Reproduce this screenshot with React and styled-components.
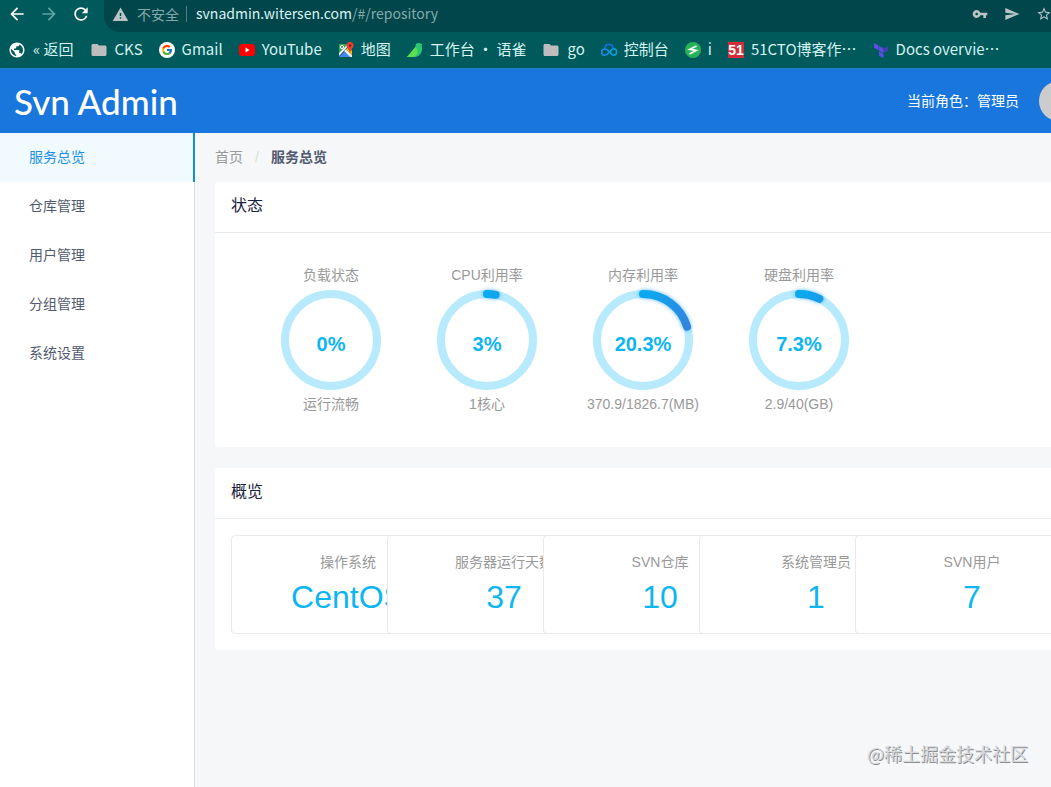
import React from 'react';
import styled, { createGlobalStyle } from 'styled-components';
import {
    MdArrowBack,
    MdArrowForward,
    MdRefresh,
    MdWarning,
    MdVpnKey,
    MdSend,
    MdStarBorder,
    MdFolder,
    MdPublic,
} from 'react-icons/md';
import { FcGoogle } from 'react-icons/fc';

const cjk = '"Noto Sans CJK SC", sans-serif';
const Cian = '#0db6f1';
const Gris = '#999';

const GlobalStyle = createGlobalStyle`
    * {
        box-sizing: border-box;
    }
    body {
        margin: 0;
        font-family: "Liberation Sans", ${cjk};
        font-size: 14px;
        color: #515a6e;
        background-color: #f5f7f9;
    }
    a {
        color: inherit;
        text-decoration: none;
    }
    h1, h2, p, ul, ol {
        margin: 0;
        padding: 0;
        font-weight: 400;
        list-style: none;
    }
`;

const Page = styled.div`
    position: relative;
    min-height: 100vh;
    display: flex;
    flex-direction: column;
    overflow: hidden;
`;

/* browser */
const Browser = styled.div`
    font-family: ${cjk};
    background-color: #005a5c;
    color: #d5f3f1;
    font-size: 15px;
`;
const Toolbar = styled.div`
    height: 32px;
    display: flex;
    align-items: flex-start;
`;
const NavButtons = styled.div`
    display: flex;
    gap: 12px;
    padding: 4px 13px 0 7px;
`;
const IconButton = styled.button`
    display: flex;
    flex-shrink: 0;
    padding: 0;
    border: 0;
    background: none;
    font-size: ${props => props.$size || 20}px;
    color: ${props => props.$color || '#fff'};
`;
const AddressBar = styled.div`
    flex: 1;
    height: 32px;
    display: flex;
    align-items: center;
    padding: 0 0 4px 8px;
    border-radius: 0 0 0 16px;
    background-color: #00464b;
    color: #86aaac;
    font-size: 14px;
    white-space: nowrap;
    svg {
        flex-shrink: 0;
    }
`;
const NotSecure = styled.span`
    margin-left: 8px;
    padding-right: 7px;
    border-right: 1px solid #4f8285;
    line-height: 16px;
`;
const Url = styled.span`
    flex: 1;
    margin-left: 9px;
    line-height: 20px;
    padding-bottom: 2px;
    b {
        font-weight: 400;
        color: #dcf3f3;
    }
`;
const Actions = styled.div`
    display: flex;
    gap: 16px;
    margin-right: -1px;
`;
const Bookmarks = styled.nav`
    height: 36px;
    display: flex;
    align-items: center;
    gap: 16px;
    padding: 0 8px;
    white-space: nowrap;
`;
const Bookmark = styled.a`
    display: flex;
    align-items: center;
    gap: 7px;
    line-height: 20px;
    svg {
        flex-shrink: 0;
    }
`;
const BookmarkText = styled.span`
    padding-bottom: 3px;
`;

/* app */
const Header = styled.header`
    height: 65px;
    display: flex;
    align-items: center;
    justify-content: space-between;
    padding-left: 14px;
    background-color: #1876dc;
    border-top: 1px solid #1d7fc0;
    color: #fff;
    font-family: ${cjk};
`;
const Logo = styled.h1`
    font-family: Lato, sans-serif;
    font-size: 35px;
    font-weight: 500;
    line-height: 64px;
`;
const User = styled.div`
    display: flex;
    align-items: center;
    gap: 20px;
    margin-right: -28px;
    line-height: 20px;
`;
const Role = styled.span`
    padding-bottom: 2px;
`;
const Avatar = styled.span`
    width: 40px;
    height: 40px;
    border-radius: 50%;
    background-color: #ccc;
`;
const Body = styled.div`
    flex: 1;
    display: flex;
`;
const Sidebar = styled.nav`
    width: 195px;
    flex-shrink: 0;
    background-color: #fff;
    border-right: 1px solid #dcdee2;
`;
const MenuItem = styled.a`
    display: block;
    height: 49px;
    padding-left: 29px;
    line-height: 49px;
    margin-right: -1px;
    color: ${props => (props.$active ? '#1c90e8' : '#515a6e')};
    background-color: ${props => (props.$active ? '#f0faff' : 'transparent')};
    border-right: ${props => (props.$active ? '2px solid #0f93c9' : '0')};
`;
const Main = styled.main`
    flex: 1;
    min-width: 0;
    display: flex;
    flex-direction: column;
    gap: 21px;
    padding-left: 20px;
`;
const Breadcrumb = styled.ol`
    display: flex;
    height: 49px;
    margin-bottom: -21px;
    line-height: 49px;
    color: ${Gris};
    li + li {
        color: #515a6e;
        font-weight: 700;
    }
    li + li::before {
        content: '/';
        margin: 0 12px;
        font-weight: 400;
        color: #dcdee2;
    }
`;
const Panel = styled.section`
    background-color: #fff;
    border-radius: 4px 0 0 4px;
`;
const PanelTitle = styled.h2`
    height: 51px;
    padding-left: 16px;
    line-height: 48px;
    font-size: 16px;
    color: #17233d;
    border-bottom: 1px solid #e8eaec;
`;
const Gauges = styled.ul`
    display: grid;
    grid-template-columns: repeat(4, 156px);
    padding: 32px 16px 32px 38px;
`;
const GaugeItem = styled.li`
    display: flex;
    flex-direction: column;
    align-items: center;
    color: ${Gris};
    line-height: 21px;
`;
const Ring = styled.div`
    display: grid;
    place-items: center;
    margin: 4px 0;
    > * {
        grid-area: 1 / 1;
    }
    svg {
        display: block;
        overflow: visible;
    }
`;
const Percent = styled.strong`
    padding-top: 8px;
    font-size: 20px;
    color: ${Cian};
`;
const Stats = styled.ul`
    display: grid;
    grid-template-columns: repeat(5, 156px);
    padding: 16px;
`;
/* each box is wider than its column, the next one covers the rest */
const StatBox = styled.li`
    width: 234px;
    height: 99px;
    padding-top: 16px;
    text-align: center;
    background-color: #fff;
    border: 1px solid #e8eaec;
    border-radius: 4px;
`;
const StatLabel = styled.p`
    line-height: 21px;
    color: ${Gris};
`;
const StatValue = styled.p`
    margin-top: 6px;
    font-size: 32px;
    line-height: 36px;
    color: ${Cian};
`;
const Watermark = styled.p`
    position: absolute;
    right: 23px;
    bottom: 20px;
    font-size: 18px;
    line-height: 27px;
    font-family: ${cjk};
    color: #d8d9db;
    text-shadow: 1px 1px 0 #8c8d90;
`;

const GoogleDisc = styled.span`
    display: flex;
    padding: 2px;
    border-radius: 50%;
    background-color: #fff;
`;
const MapsIcon = () => (
    <svg width="16" height="16" viewBox="0 0 16 16">
        <path d="M1 2h9L1 11z" fill="#34a853" />
        <path d="M1 11l9-9 1 1-10 11z" fill="#fff" />
        <path d="M1 15l5.500-5.500L12 15z" fill="#4285f4" />
        <path d="M6 9l2-2 6 6v2h-2z" fill="#e8eaed" />
        <path d="M8 7l3-2 3 4v4z" fill="#fbbc04" />
        <circle cx="4" cy="5" r="1.6" fill="none" stroke="#fff" />
        <path d="M12 0a3.600 3.600 0 0 0-3.600 3.600C8.400 6 11 7 12 11c1-4 3.600-5 3.600-7.400A3.600 3.600 0 0 0 12 0z" fill="#ea4335" />
        <circle cx="12" cy="3.600" r="1.300" fill="#8c1b12" />
    </svg>
);
const YoutubeIcon = () => (
    <svg width="16" height="16" viewBox="0 0 16 16">
        <rect y="2" width="16" height="12" rx="3" fill="#f00" />
        <path d="M6.500 5.500v5L10.500 8z" fill="#fff" />
    </svg>
);
const YuqueIcon = () => (
    <svg width="16" height="16" viewBox="0 0 16 16">
        <path d="M0 15L8.500 5C8 2 10 .5 12 1c1.200.2 1.500 1 3.500 1-1.500 1.500 0 3-.5 6-.8 4.500-4 7.500-9 7z" fill="#29c76f" />
        <path d="M0 15L8.500 5c3 3 3 8.500-2.500 10z" fill="#5be04e" />
    </svg>
);
const CloudIcon = () => (
    <svg width="16" height="16" viewBox="0 0 16 16" fill="none" strokeWidth="1.500" strokeLinecap="round">
        <path d="M3.500 7C3.700 4.500 5.500 2.500 8 2.500c2.300 0 4.200 1.600 4.500 4.300" stroke="#1273e6" />
        <path d="M9.500 9l-3 3c-.9.900-1.600 1.200-2.600 1.200A3.100 3.100 0 0 1 3.500 7C5 6.800 6 7.500 7 8.500" stroke="#1a8cf0" />
        <path d="M7 8.500l3.200 3.300c.8.900 1.300 1.400 2.200 1.400a3.100 3.100 0 0 0 .1-6.400c-1.200 0-2 .7-3 2.200" stroke="#00a4e8" />
    </svg>
);
const GreenIcon = () => (
    <svg width="16" height="16" viewBox="0 0 16 16">
        <circle cx="8" cy="8" r="8" fill="#25b35a" />
        <path d="M11.500 4L4.800 7.300l6.400 1.200L4.500 12" fill="none" stroke="#fff" strokeWidth="1.700" />
    </svg>
);
const Badge51 = styled.span`
    width: 16px;
    height: 16px;
    background-color: #d32f3a;
    color: #fff;
    font: 700 14px/16px "Liberation Sans", sans-serif;
    text-align: center;
`;
const TerraformIcon = () => (
    <svg width="16" height="16" viewBox="0 0 16 16">
        <path d="M1 1l4.500 2.600v4.700L1 5.700zM6 4l4.500 2.600v4.700L6 8.700zM6 9.500l4.500 2.600V16L6 13.800z" fill="#5c4ee5" />
        <path d="M11 6.600L15 4v4.700l-4 2.600z" fill="#4040b2" />
    </svg>
);

const bookmarks = [
    { icon: <MdPublic size={18} color="#fff" />, text: '« 返回' },
    { icon: <MdFolder size={18} color="#bdbdbd" />, text: 'CKS' },
    { icon: <GoogleDisc><FcGoogle size={12} /></GoogleDisc>, text: 'Gmail' },
    { icon: <YoutubeIcon />, text: 'YouTube' },
    { icon: <MapsIcon />, text: '地图' },
    { icon: <YuqueIcon />, text: '工作台 · 语雀' },
    { icon: <MdFolder size={18} color="#bdbdbd" />, text: 'go' },
    { icon: <CloudIcon />, text: '控制台' },
    { icon: <GreenIcon />, text: 'i' },
    { icon: <Badge51>51</Badge51>, text: '51CTO博客作…' },
    { icon: <TerraformIcon />, text: 'Docs overvie⋯' },
];

const menu = ['服务总览', '仓库管理', '用户管理', '分组管理', '系统设置'];

const gauges = [
    { title: '负载状态', value: 0, detail: '运行流畅' },
    { title: 'CPU利用率', value: 3, detail: '1核心' },
    { title: '内存利用率', value: 20.3, detail: '370.9/1826.7(MB)' },
    { title: '硬盘利用率', value: 7.3, detail: '2.9/40(GB)' },
];

const stats = [
    { label: '操作系统', value: 'CentOS' },
    { label: '服务器运行天数', value: '37' },
    { label: 'SVN仓库', value: '10' },
    { label: '系统管理员', value: '1' },
    { label: 'SVN用户', value: '7' },
];

const Gauge = ({ title, value, detail }) => {
    // end point of the arc, clockwise from the top
    const angle = (value / 100) * 2 * Math.PI;
    const x = 50 + 46 * Math.sin(angle);
    const y = 50 - 46 * Math.cos(angle);

    return (
        <GaugeItem>
            <p>{title}</p>
            <Ring>
                <svg width="100" height="100" viewBox="0 0 100 100">
                    <defs>
                        <linearGradient id="arc" gradientUnits="userSpaceOnUse" x1="50" y1="4" x2="98" y2="40">
                            <stop offset="0" stopColor="#0aaaf0" />
                            <stop offset="1" stopColor="#3580dc" />
                        </linearGradient>
                    </defs>
                    <circle cx="50" cy="50" r="46" fill="none" stroke="#b7eafc" strokeWidth="8" />
                    {value > 0 && (
                        <path
                            d={`M50 4A46 46 0 0 1 ${x} ${y}`}
                            fill="none"
                            stroke="url(#arc)"
                            strokeWidth="8"
                            strokeLinecap="round"
                            style={{ filter: 'drop-shadow(0 0 2px #58b8ff)' }}
                        />
                    )}
                </svg>
                <Percent>{value}%</Percent>
            </Ring>
            <p>{detail}</p>
        </GaugeItem>
    );
};

const App = () => {
    return (
        <Page lang="zh-CN">
            <GlobalStyle />
            <Browser>
                <Toolbar>
                    <NavButtons>
                        <IconButton aria-label="后退"><MdArrowBack /></IconButton>
                        <IconButton aria-label="前进" $color="#5fa3a3"><MdArrowForward /></IconButton>
                        <IconButton aria-label="刷新"><MdRefresh /></IconButton>
                    </NavButtons>
                    <AddressBar>
                        <MdWarning size={17} color="#b9c4c6" />
                        <NotSecure>不安全</NotSecure>
                        <Url><b>svnadmin.witersen.com</b>/#/repository</Url>
                        <Actions>
                            <IconButton aria-label="密码" $size={16} $color="#b9c4c6"><MdVpnKey /></IconButton>
                            <IconButton aria-label="发送" $size={16} $color="#b9c4c6"><MdSend /></IconButton>
                            <IconButton aria-label="收藏" $size={16} $color="#b9c4c6"><MdStarBorder /></IconButton>
                        </Actions>
                    </AddressBar>
                </Toolbar>
                <Bookmarks>
                    {bookmarks.map(item => (
                        <Bookmark key={item.text} href="#">
                            {item.icon}
                            <BookmarkText>{item.text}</BookmarkText>
                        </Bookmark>
                    ))}
                </Bookmarks>
            </Browser>

            <Header>
                <Logo>Svn Admin</Logo>
                <User>
                    <Role>当前角色：管理员</Role>
                    <Avatar />
                </User>
            </Header>

            <Body>
                <Sidebar>
                    {menu.map((item, i) => (
                        <MenuItem key={item} href="#" $active={i === 0}>{item}</MenuItem>
                    ))}
                </Sidebar>
                <Main>
                    <Breadcrumb>
                        <li><a href="#">首页</a></li>
                        <li>服务总览</li>
                    </Breadcrumb>
                    <Panel>
                        <PanelTitle>状态</PanelTitle>
                        <Gauges>
                            {gauges.map(gauge => <Gauge key={gauge.title} {...gauge} />)}
                        </Gauges>
                    </Panel>
                    <Panel>
                        <PanelTitle>概览</PanelTitle>
                        <Stats>
                            {stats.map(stat => (
                                <StatBox key={stat.label}>
                                    <StatLabel>{stat.label}</StatLabel>
                                    <StatValue>{stat.value}</StatValue>
                                </StatBox>
                            ))}
                        </Stats>
                    </Panel>
                </Main>
            </Body>
            <Watermark>@稀土掘金技术社区</Watermark>
        </Page>
    );
};

export default App;
